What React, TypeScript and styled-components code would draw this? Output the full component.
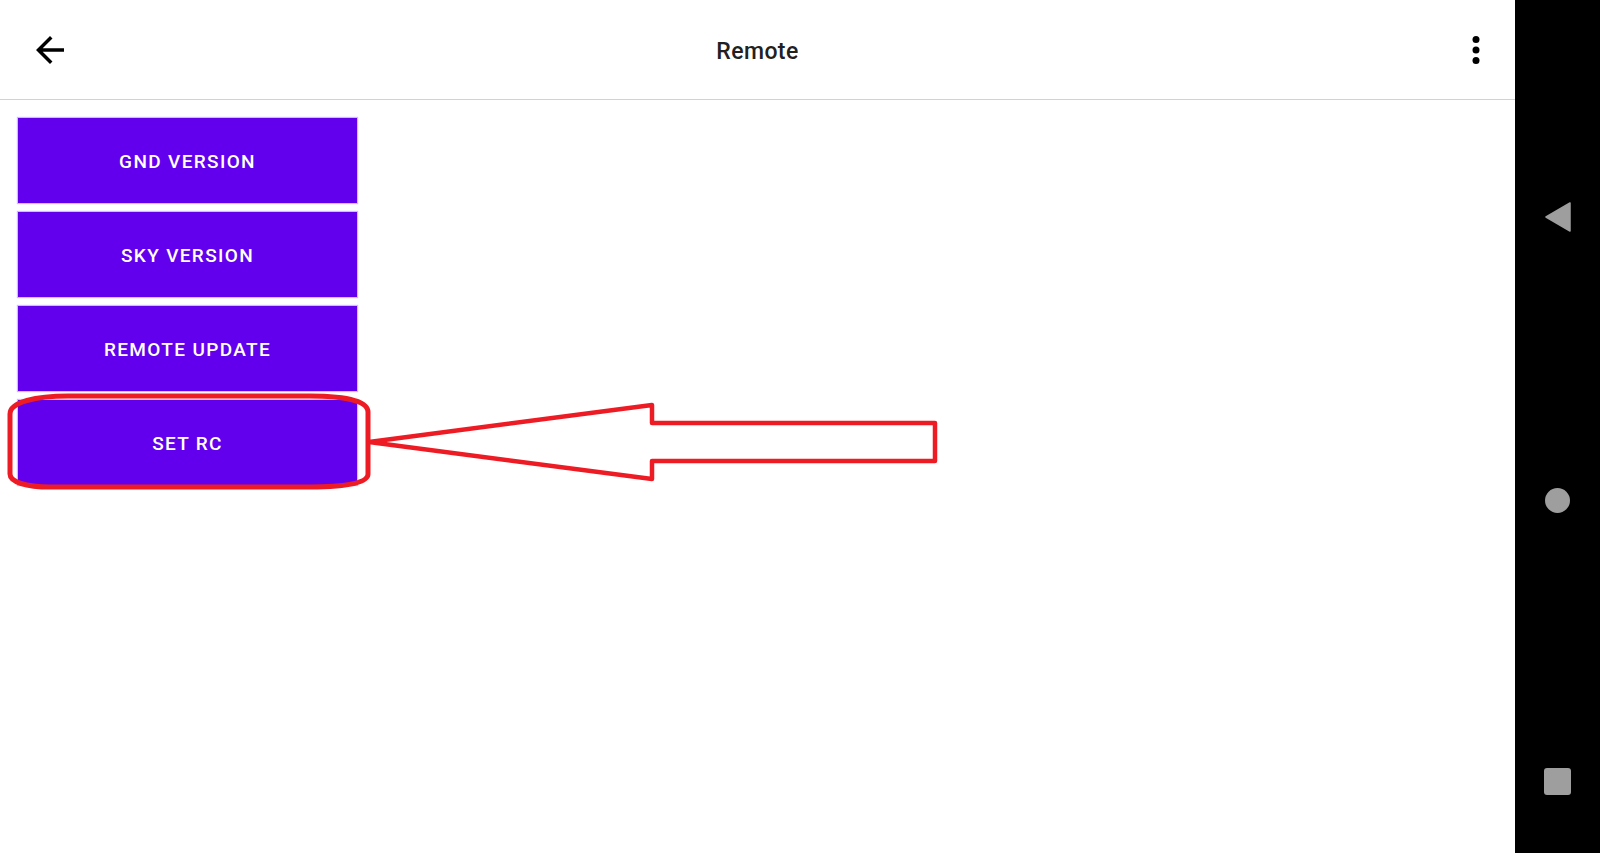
import { FC } from 'react';
import styled, { createGlobalStyle } from 'styled-components';

const GlobalStyle = createGlobalStyle`
    html, body {
        margin: 0;
        padding: 0;
        background: #ffffff;
        font-family: Roboto, 'Noto Sans', sans-serif;
        overflow: hidden;
    }
`;

const Screen = styled.div`
    position: relative;
    display: flex;
    width: 100vw;
    height: 100vh;
`;

const Main = styled.div`
    flex: 1;
    display: flex;
    flex-direction: column;
    background: #ffffff;
`;

const TopBar = styled.header`
    display: grid;
    grid-template-columns: 1fr auto 1fr;
    align-items: center;
    height: 99px;
    border-bottom: 1px solid #d2d2d2;
`;

const IconButton = styled.div<{ $side: 'left' | 'right' }>`
    display: flex;
    justify-self: ${({ $side }) => ($side === 'left' ? 'start' : 'end')};
    padding: ${({ $side }) => ($side === 'left' ? '0 0 0 29px' : '0 18px 0 0')};
    color: #000000;
`;

const Title = styled.h1`
    margin: 3px 0 0;
    font-size: 23px;
    font-weight: 500;
    color: #212121;
    letter-spacing: 0.4px;
`;

const ButtonList = styled.div`
    display: flex;
    flex-direction: column;
    gap: 9px;
    padding: 18px 0 0 18px;
`;

const ActionButton = styled.button`
    width: 339px;
    height: 85px;
    padding: 1px 0 0;
    border: none;
    background: #6200ee;
    color: #ffffff;
    font-family: Roboto, sans-serif;
    font-size: 19px;
    font-weight: 500;
    letter-spacing: 1.35px;
    text-transform: uppercase;
    box-shadow: 0 0 1px 1px rgba(140, 110, 240, 0.45);
    cursor: pointer;
`;

const NavBar = styled.nav`
    width: 85px;
    background: #000000;
    display: flex;
    flex-direction: column;
    align-items: center;
    justify-content: space-between;
    padding: 202px 0 58px;
    box-sizing: border-box;
`;

const NavCircle = styled.div`
    width: 25px;
    height: 25px;
    border-radius: 50%;
    background: #9e9e9e;
`;

const NavSquare = styled.div`
    width: 27px;
    height: 27px;
    border-radius: 3px;
    background: #9e9e9e;
`;

const Annotation = styled.svg`
    position: absolute;
    left: 0;
    top: 0;
    pointer-events: none;
`;

const ArrowBackIcon: FC = () => (
    <svg width="42" height="42" viewBox="0 0 24 24" fill="currentColor">
        <path d="M20 11H7.83l5.59-5.59L12 4l-8 8 8 8 1.41-1.41L7.83 13H20v-2z" />
    </svg>
);

const MoreVertIcon: FC = () => (
    <svg width="42" height="42" viewBox="0 0 24 24" fill="currentColor">
        <circle cx="12" cy="6" r="2" />
        <circle cx="12" cy="12" r="2" />
        <circle cx="12" cy="18" r="2" />
    </svg>
);

const actions = ['GND Version', 'Sky Version', 'Remote Update', 'Set RC'];

export default function App() {
    return (
        <>
            <GlobalStyle />
            <Screen>
                <Main>
                    <TopBar>
                        <IconButton $side="left">
                            <ArrowBackIcon />
                        </IconButton>
                        <Title>Remote</Title>
                        <IconButton $side="right">
                            <MoreVertIcon />
                        </IconButton>
                    </TopBar>
                    <ButtonList>
                        {actions.map((label) => (
                            <ActionButton key={label}>{label}</ActionButton>
                        ))}
                    </ButtonList>
                </Main>
                <NavBar>
                    <svg width="26" height="30" viewBox="0 0 26 30">
                        <path d="M25 1 L25 29 L1 15 Z" fill="#9e9e9e" stroke="#9e9e9e" strokeWidth="1.5" strokeLinejoin="round" />
                    </svg>
                    <NavCircle />
                    <NavSquare />
                </NavBar>
                {/* red hand-drawn highlight over the SET RC button */}
                <Annotation width="1000" height="520" viewBox="0 0 1000 520">
                    <path
                        d="M68 396 L310 396 C342 396 368 400 368 412 L368 474 C368 484 342 487 310 487 L50 487 C26 487 10 482 10 474 L10 414 C10 402 36 396 68 396 Z"
                        fill="none"
                        stroke="#ed1c24"
                        strokeWidth="5"
                    />
                    <path
                        d="M369 442 L652 405 L652 423 L935 423 L935 461 L652 461 L652 479 Z"
                        fill="none"
                        stroke="#ed1c24"
                        strokeWidth="4.5"
                        strokeLinejoin="round"
                    />
                </Annotation>
            </Screen>
        </>
    );
}
